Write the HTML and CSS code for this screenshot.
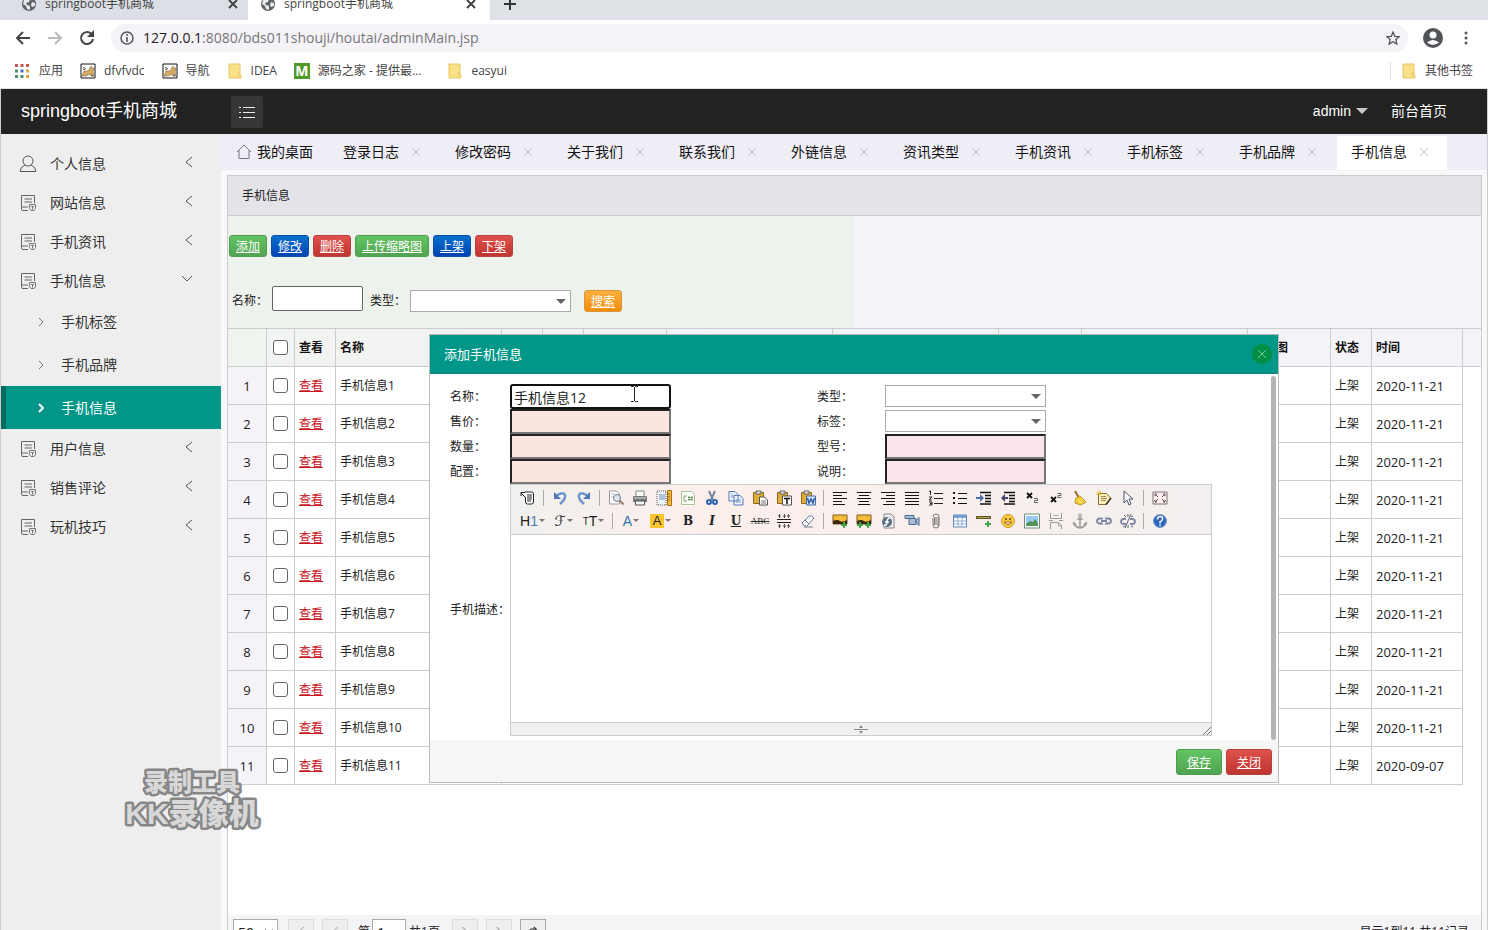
FILE: index.html
```html
<!DOCTYPE html>
<html lang="zh-CN">
<head>
<meta charset="utf-8">
<title>springboot手机商城</title>
<link rel="stylesheet" href="styles.css">
</head>
<body>
<svg class="defs" aria-hidden="true">
  <symbol id="globe" viewBox="0 0 16 16"><circle cx="8" cy="8" r="7" fill="#5f6368"/><path d="M3 4l3-2 3 1-1 3-3 1 1 2 3 1v4l-3-1-1-3-3-2zM11 6l3 1v3l-3 1-1-2z" fill="#e8eaee"/></symbol>
  <symbol id="close" viewBox="0 0 10 10"><path d="M1 1l8 8M9 1l-8 8" fill="none" stroke="currentColor"/></symbol>
  <symbol id="folder" viewBox="0 0 14 16"><path d="M1 1h11v10l1 1v3H1z" fill="#fbe08a" stroke="#e8c662"/><path d="M10 14v-4h2" fill="none" stroke="#e8c662"/></symbol>
  <symbol id="cat" viewBox="0 0 16 16"><path d="M1 1h14v14H1z" fill="#fff" stroke="#111"/><path d="M2 13l2-5 4 0 3-5 1 2 2 0-1 4 1 4h-3l-1-2-4 2z" fill="#d6aa60" stroke="#8f7852" stroke-width=".7"/><path d="M3 4l3 2M3 6l2 1M11 12l2 1" stroke="#555"/></symbol>
  <symbol id="doc" viewBox="0 0 18 18"><path d="M9 16.500H4q-1.500 0-1.500-1.500V1.500h13V9M5.500 5h7.500M5.500 8h7.500M2.500 13H9" fill="none" stroke="#666"/><path d="M10.500 10.500h6v4L15 16.500h-3L10.500 14.500zM12 12.500h3M13.500 12.500v3" fill="none" stroke="#777"/></symbol>
  <symbol id="left" viewBox="0 0 8 12"><path d="M7 1L1 6l6 5" fill="none" stroke="currentColor"/></symbol>
  <symbol id="right" viewBox="0 0 6 10"><path d="M1 1l4 4-4 4" fill="none" stroke="currentColor"/></symbol>
  <symbol id="picture" viewBox="0 0 16 16"><path d="M1 2h14v9H1z" fill="#f7bd38" stroke="#805b16"/><path d="M1 8q4-2 7 0t7-1v4H1z" fill="#3a2a14"/></symbol>
</svg>

<div class="chrome">
  <div class="strip">
    <div class="btab btab-idle"><svg><use href="#globe"/></svg><span>springboot手机商城</span><button aria-label="关闭标签页"><svg><use href="#close"/></svg></button></div>
    <div class="btab btab-on"><svg><use href="#globe"/></svg><span>springboot手机商城</span><button aria-label="关闭标签页"><svg><use href="#close"/></svg></button></div>
    <button class="newtab" aria-label="新标签页"><svg viewBox="0 0 12 12"><path d="M6 0v12M0 6h12" stroke="#333" stroke-width="2"/></svg></button>
  </div>
  <div class="address">
    <button class="nav" aria-label="后退"><svg viewBox="0 0 16 16"><path d="M15 8H2M8 2L2 8l6 6" fill="none" stroke="#444" stroke-width="2"/></svg></button>
    <button class="nav" aria-label="前进"><svg viewBox="0 0 16 16"><path d="M1 8h13M8 2l6 6-6 6" fill="none" stroke="#bbb" stroke-width="2"/></svg></button>
    <button class="nav" aria-label="刷新"><svg viewBox="0 0 16 16"><path d="M14 9a6 6 0 1 1-2-5.500l2 2" fill="none" stroke="#444" stroke-width="2"/><path d="M15 0v7H8z" fill="#444"/></svg></button>
    <div class="omnibox">
      <svg viewBox="0 0 14 14"><circle cx="7" cy="7" r="6" fill="none" stroke="#555" stroke-width="1.500"/><path d="M7 6v5M7 3v1.800" stroke="#555" stroke-width="1.600"/></svg>
      <span class="url"><b>127.0.0.1</b>:8080/bds011shouji/houtai/adminMain.jsp</span>
      <svg viewBox="0 0 14 14"><path d="M7 1l1.700 4.300 4.600.3-3.500 3 1.100 4.500L7 10.700l-3.900 2.400 1.100-4.500-3.500-3 4.600-.3z" fill="none" stroke="#555" stroke-width="1.300"/></svg>
    </div>
    <svg class="avatar" viewBox="0 0 20 20"><circle cx="10" cy="10" r="10" fill="#505357"/><circle cx="10" cy="7" r="3.500" fill="#fff"/><path d="M4 14.500q6-5 12 0-6 4.500-12 0z" fill="#fff"/></svg>
    <svg class="kebab" viewBox="0 0 4 14"><circle cx="2" cy="2" r="1.500"/><circle cx="2" cy="7" r="1.500"/><circle cx="2" cy="12" r="1.500"/></svg>
  </div>
  <div class="bookmarks">
    <a href="#" class="bm"><svg class="apps" viewBox="0 0 14 14"><path d="M0 0h3v3H0zM5.500 0h3v3h-3zM11 0h3v3h-3z" fill="#c6574c"/><path d="M0 5.500h3v3H0z" fill="#4a8f65"/><path d="M5.500 5.500h3v3h-3z" fill="#3974bd"/><path d="M11 5.500h3v3h-3zM11 11h3v3h-3z" fill="#d9a33f"/><path d="M0 11h3v3H0zM5.500 11h3v3h-3z" fill="#4e9464"/></svg>应用</a>
    <a href="#" class="bm"><svg><use href="#cat"/></svg>dfvfvdc</a>
    <a href="#" class="bm"><svg><use href="#cat"/></svg>导航</a>
    <a href="#" class="bm bm-folder"><svg><use href="#folder"/></svg>IDEA</a>
    <a href="#" class="bm"><span class="mlogo">M</span>源码之家 - 提供最...</a>
    <a href="#" class="bm bm-easy"><svg><use href="#folder"/></svg>easyui</a>
    <a href="#" class="bm bm-other"><svg><use href="#folder"/></svg>其他书签</a>
  </div>
</div>

<div class="app">
  <header class="top">
    <h1>springboot手机商城</h1>
    <button class="fold" aria-label="折叠菜单"><svg viewBox="0 0 16 12"><path d="M4 1.500h12M4 6.500h12M4 11.500h12M0 1.500h2M0 6.500h2M0 11.500h2" stroke="#eee"/></svg></button>
    <a href="#" class="user">admin<i></i></a>
    <a href="#" class="front">前台首页</a>
  </header>

  <div class="frame">
    <nav class="side">
      <a href="#" class="item"><svg viewBox="0 0 18 18"><circle cx="9" cy="6" r="5" fill="none" stroke="#555"/><path d="M6 10q-4.500 1.500-5 6.500h16q-.5-5-5-6.500" fill="none" stroke="#555"/></svg>个人信息<svg class="arrow"><use href="#left"/></svg></a>
      <a href="#" class="item"><svg><use href="#doc"/></svg>网站信息<svg class="arrow"><use href="#left"/></svg></a>
      <a href="#" class="item"><svg><use href="#doc"/></svg>手机资讯<svg class="arrow"><use href="#left"/></svg></a>
      <a href="#" class="item"><svg><use href="#doc"/></svg>手机信息<svg class="arrow open" viewBox="0 0 12 8"><path d="M1 1l5 5 5-5" fill="none" stroke="#555"/></svg></a>
      <a href="#" class="sub"><svg><use href="#right"/></svg>手机标签</a>
      <a href="#" class="sub"><svg><use href="#right"/></svg>手机品牌</a>
      <a href="#" class="sub current"><svg><use href="#right"/></svg>手机信息</a>
      <a href="#" class="item"><svg><use href="#doc"/></svg>用户信息<svg class="arrow"><use href="#left"/></svg></a>
      <a href="#" class="item"><svg><use href="#doc"/></svg>销售评论<svg class="arrow"><use href="#left"/></svg></a>
      <a href="#" class="item"><svg><use href="#doc"/></svg>玩机技巧<svg class="arrow"><use href="#left"/></svg></a>
    </nav>

    <main class="main">
      <div class="tabs">
        <a href="#" class="home"><svg viewBox="0 0 16 16"><path d="M1 8l7-7 7 7M3 6.500V14.500h10V6.500" fill="none" stroke="#777"/></svg>我的桌面</a>
        <a href="#" class="tab">登录日志<svg><use href="#close"/></svg></a>
        <a href="#" class="tab">修改密码<svg><use href="#close"/></svg></a>
        <a href="#" class="tab">关于我们<svg><use href="#close"/></svg></a>
        <a href="#" class="tab">联系我们<svg><use href="#close"/></svg></a>
        <a href="#" class="tab">外链信息<svg><use href="#close"/></svg></a>
        <a href="#" class="tab">资讯类型<svg><use href="#close"/></svg></a>
        <a href="#" class="tab">手机资讯<svg><use href="#close"/></svg></a>
        <a href="#" class="tab">手机标签<svg><use href="#close"/></svg></a>
        <a href="#" class="tab">手机品牌<svg><use href="#close"/></svg></a>
        <a href="#" class="tab on">手机信息<svg><use href="#close"/></svg></a>
      </div>

      <section class="panel">
        <h2 class="panel-title">手机信息</h2>
        <div class="tools">
          <div class="actions">
            <a href="#" class="btn green">添加</a><a href="#" class="btn blue">修改</a><a href="#" class="btn red">删除</a><a href="#" class="btn green">上传缩略图</a><a href="#" class="btn blue">上架</a><a href="#" class="btn red">下架</a>
          </div>
          <form class="search">
            <label for="q-name">名称：</label><input id="q-name" class="q-name" type="text">
            <label for="q-type">类型：</label><span class="combo"><select id="q-type"><option></option></select></span>
            <a href="#" class="btn orange">搜索</a>
          </form>
        </div>

        <div class="grid">
          <table>
            <colgroup><col class="w39"><col class="w28"><col class="w41"><col class="w166"><col class="w41"><col class="w41"><col class="w83"><col class="w166"><col class="w166"><col class="w83"><col class="w166"><col class="w83"><col class="w41"><col class="w91"><col></colgroup>
            <thead><tr><th></th><th class="check"><input type="checkbox" aria-label="全选"></th><th>查看</th><th>名称</th><th></th><th></th><th></th><th></th><th></th><th></th><th></th><th>缩略图</th><th>状态</th><th>时间</th><th class="end"></th></tr></thead>
            <tbody>
              <tr><td class="num">1</td><td class="check"><input type="checkbox" aria-label="选择1"></td><td><a href="#">查看</a></td><td>手机信息1</td><td colspan="8"></td><td>上架</td><td class="date">2020-11-21</td></tr>
              <tr><td class="num">2</td><td class="check"><input type="checkbox" aria-label="选择2"></td><td><a href="#">查看</a></td><td>手机信息2</td><td colspan="8"></td><td>上架</td><td class="date">2020-11-21</td></tr>
              <tr><td class="num">3</td><td class="check"><input type="checkbox" aria-label="选择3"></td><td><a href="#">查看</a></td><td>手机信息3</td><td colspan="8"></td><td>上架</td><td class="date">2020-11-21</td></tr>
              <tr><td class="num">4</td><td class="check"><input type="checkbox" aria-label="选择4"></td><td><a href="#">查看</a></td><td>手机信息4</td><td colspan="8"></td><td>上架</td><td class="date">2020-11-21</td></tr>
              <tr><td class="num">5</td><td class="check"><input type="checkbox" aria-label="选择5"></td><td><a href="#">查看</a></td><td>手机信息5</td><td colspan="8"></td><td>上架</td><td class="date">2020-11-21</td></tr>
              <tr><td class="num">6</td><td class="check"><input type="checkbox" aria-label="选择6"></td><td><a href="#">查看</a></td><td>手机信息6</td><td colspan="8"></td><td>上架</td><td class="date">2020-11-21</td></tr>
              <tr><td class="num">7</td><td class="check"><input type="checkbox" aria-label="选择7"></td><td><a href="#">查看</a></td><td>手机信息7</td><td colspan="8"></td><td>上架</td><td class="date">2020-11-21</td></tr>
              <tr><td class="num">8</td><td class="check"><input type="checkbox" aria-label="选择8"></td><td><a href="#">查看</a></td><td>手机信息8</td><td colspan="8"></td><td>上架</td><td class="date">2020-11-21</td></tr>
              <tr><td class="num">9</td><td class="check"><input type="checkbox" aria-label="选择9"></td><td><a href="#">查看</a></td><td>手机信息9</td><td colspan="8"></td><td>上架</td><td class="date">2020-11-21</td></tr>
              <tr><td class="num">10</td><td class="check"><input type="checkbox" aria-label="选择10"></td><td><a href="#">查看</a></td><td>手机信息10</td><td colspan="8"></td><td>上架</td><td class="date">2020-11-21</td></tr>
              <tr><td class="num">11</td><td class="check"><input type="checkbox" aria-label="选择11"></td><td><a href="#">查看</a></td><td>手机信息11</td><td colspan="8"></td><td>上架</td><td class="date">2020-09-07</td></tr>
            </tbody>
          </table>
        </div>

        <div class="pager">
          <select class="size" aria-label="每页条数"><option>50</option></select>
          <button class="pg" aria-label="首页"><svg><use href="#left"/></svg></button>
          <button class="pg" aria-label="上一页"><svg><use href="#left"/></svg></button>
          <label class="page" for="page">第</label><input id="page" type="text" value="1"><span class="total">共1页</span>
          <button class="pg" aria-label="下一页"><svg><use href="#right"/></svg></button>
          <button class="pg" aria-label="末页"><svg><use href="#right"/></svg></button>
          <button class="pg reload" aria-label="刷新"><svg viewBox="0 0 12 12"><path d="M10 7a4.500 4.500 0 1 1-2-4M7 0l3 3-3 2" fill="none" stroke="#444" stroke-width="1.500"/></svg></button>
          <span class="count">显示1到11,共11记录</span>
        </div>

        <div class="dialog" role="dialog" aria-labelledby="dlg-title">
          <div class="dlg-head"><h3 id="dlg-title">添加手机信息</h3><button aria-label="关闭"><svg><use href="#close"/></svg></button></div>
          <form class="dlg-body">
            <label for="f-name">名称：</label><input id="f-name" class="field focus" type="text" value="手机信息12">
            <label for="f-type">类型：</label><span class="combo"><select id="f-type"><option></option></select></span>
            <label for="f-price">售价：</label><input id="f-price" class="field" type="text">
            <label for="f-tag">标签：</label><span class="combo"><select id="f-tag"><option></option></select></span>
            <label for="f-count">数量：</label><input id="f-count" class="field" type="text">
            <label for="f-model">型号：</label><input id="f-model" class="field pink" type="text">
            <label for="f-conf">配置：</label><input id="f-conf" class="field" type="text">
            <label for="f-note">说明：</label><input id="f-note" class="field pink" type="text">
            <label for="f-desc">手机描述：</label>
            <div class="editor">
              <div class="bar">
                <div class="bar-row">
                  <button type="button" aria-label="HTML代码"><svg viewBox="0 0 16 16"><path d="M4.500 2h7q2 0 2 2v8q0 2-2 2h-4q-2 0-2-2V7" fill="#fff" stroke="#222"/><path d="M7 5h5M7 7h5M7 9h5M7 11h4M1 3l4 4M1 6V2.500h4" fill="none" stroke="#222"/></svg></button><i></i>
                  <button type="button" aria-label="后退"><svg viewBox="0 0 16 16"><path d="M4 6q7-5 9-1 1 4-5 9" fill="none" stroke="#6f95cf" stroke-width="2.500"/><path d="M2 2v7h7z" fill="#4d79bb"/></svg></button>
                  <button type="button" aria-label="前进"><svg viewBox="0 0 16 16"><path d="M12 6Q5 1 3 5q-1 4 5 9" fill="none" stroke="#6f95cf" stroke-width="2.500"/><path d="M14 2v7H7z" fill="#4d79bb"/></svg></button><i></i>
                  <button type="button" aria-label="预览"><svg viewBox="0 0 16 16"><path d="M1.500 1h7l3 3v10h-10z" fill="#fff" stroke="#999"/><path d="M3 4h4M3 7h3" stroke="#bbb"/><circle cx="9" cy="8" r="3.500" fill="#d8e8f2" stroke="#778"/><path d="M11.500 10.500l4 4" stroke="#9b8064" stroke-width="2"/></svg></button>
                  <button type="button" aria-label="打印"><svg viewBox="0 0 16 16"><path d="M4 1h8v6H4z" fill="#fff" stroke="#888"/><path d="M1 7q0-1 1-1h12q1 0 1 1v5H1z" fill="#777"/><path d="M2 8h12" stroke="#ddd"/><path d="M3.500 11h9v4h-9z" fill="#f4f4f4" stroke="#555"/></svg></button>
                  <button type="button" aria-label="模板"><svg viewBox="0 0 16 16"><path d="M1 1h9v14H1z" fill="#eef4fa" stroke="#555" stroke-dasharray="1"/><path d="M3 5h6M3 7h6M3 9h6" stroke="#6b93c4"/><path d="M11.500.5h4v15h-4z" fill="#f2bd3c" stroke="#aa7217"/><path d="M12 4h2M12 7h2M12 10h2" stroke="#925e10"/></svg></button>
                  <button type="button" aria-label="代码"><svg viewBox="0 0 16 16"><path d="M1.500 1.500h10l3 3v10h-13z" fill="#fcfff8" stroke="#a9c399"/><path d="M7 6H4v5h3M9 6v5M12 6v5M8 7.500h5M8 9.500h5" fill="none" stroke="#779e62"/></svg></button>
                  <button type="button" aria-label="剪切"><svg viewBox="0 0 16 16"><path d="M5 1l4 9M11 1L7 10" fill="none" stroke="#76889d" stroke-width="2"/><circle cx="5" cy="12" r="2" fill="none" stroke="#2b66b1" stroke-width="2"/><circle cx="11" cy="12" r="2" fill="none" stroke="#2b66b1" stroke-width="2"/></svg></button>
                  <button type="button" aria-label="复制"><svg viewBox="0 0 16 16"><path d="M1 1.500h6l3 3V11H1zM6 5.500h6l3 3V15H6z" fill="#edf4ff" stroke="#5278b5"/><path d="M3 5h3M3 7h3M8 10h5M8 12h5" stroke="#7e9dcc"/></svg></button>
                  <button type="button" aria-label="粘贴"><svg viewBox="0 0 16 16"><path d="M1.500 2.500h10v11h-10z" fill="#e0ad38" stroke="#8b681a"/><path d="M4 1h5v3H4z" fill="#ddd" stroke="#666"/><path d="M7.500 7h5l3 3v5h-8z" fill="#fff" stroke="#555"/><path d="M9 11h5M9 13h5" stroke="#777"/></svg></button>
                  <button type="button" aria-label="粘贴为无格式文本"><svg viewBox="0 0 16 16"><path d="M1.500 2.500h10v11h-10z" fill="#e0ad38" stroke="#8b681a"/><path d="M4 1h5v3H4z" fill="#ddd" stroke="#666"/><path d="M6.500 6h9v9h-9z" fill="#fff" stroke="#555"/><path d="M8 8.500h6M11 8v6" stroke="#111" stroke-width="1.500"/></svg></button>
                  <button type="button" aria-label="从Word粘贴"><svg viewBox="0 0 16 16"><path d="M1.500 2.500h10v11h-10z" fill="#e0ad38" stroke="#8b681a"/><path d="M4 1h5v3H4z" fill="#ddd" stroke="#666"/><path d="M6.500 6h9v9h-9z" fill="#dceaff" stroke="#486ba5"/><path d="M7.500 8l1.500 5 2-4 2 4 1.500-5" fill="none" stroke="#2459a4" stroke-width="1.500"/></svg></button><i></i>
                  <button type="button" aria-label="左对齐"><svg viewBox="0 0 16 16"><path d="M1 2.500h14M1 5.500h9M1 8.500h14M1 11.500h9M1 14.500h12" stroke="#111"/></svg></button>
                  <button type="button" aria-label="居中"><svg viewBox="0 0 16 16"><path d="M1 2.500h14M3 5.500h10M1 8.500h14M3 11.500h10M2 14.500h12" stroke="#111"/></svg></button>
                  <button type="button" aria-label="右对齐"><svg viewBox="0 0 16 16"><path d="M1 2.500h14M6 5.500h9M1 8.500h14M6 11.500h9M3 14.500h12" stroke="#111"/></svg></button>
                  <button type="button" aria-label="两端对齐"><svg viewBox="0 0 16 16"><path d="M1 2.500h14M1 5.500h14M1 8.500h14M1 11.500h14M1 14.500h14" stroke="#111"/></svg></button>
                  <button type="button" aria-label="编号"><svg viewBox="0 0 16 16"><path d="M6 3.500h9M6 8.500h9M6 13.500h9M2.500 1v4M1 2l1.500-1M1 7h3L1 10h3M1 12h3v3H1M2 13.500h2" fill="none" stroke="#222"/></svg></button>
                  <button type="button" aria-label="项目符号"><svg viewBox="0 0 16 16"><path d="M6 3.500h9M6 8.500h9M6 13.500h9" stroke="#111"/><path d="M1 2h2v2H1zM1 7h2v2H1zM1 12h2v2H1z" fill="#111"/></svg></button>
                  <button type="button" aria-label="增加缩进"><svg viewBox="0 0 16 16"><path d="M4 2.500h11M9 5.500h6M9 8.500h6M9 11.500h6M4 14h11" stroke="#111" stroke-width="1.500"/><path d="M0 7h4V4l4 4-4 4V9H0z" fill="#506ba5"/></svg></button>
                  <button type="button" aria-label="减少缩进"><svg viewBox="0 0 16 16"><path d="M4 2.500h11M9 5.500h6M9 8.500h6M9 11.500h6M4 14h11" stroke="#111" stroke-width="1.500"/><path d="M8 7H5V4L1 8l4 4V9h3z" fill="#484573"/></svg></button>
                  <button type="button" aria-label="下标"><svg viewBox="0 0 16 16"><path d="M3 3l5 5M8 3L3 8" stroke="#111" stroke-width="1.800"/><path d="M10 8.500h3.500v2h-3v2H14" fill="none" stroke="#444" stroke-width=".8"/></svg></button>
                  <button type="button" aria-label="上标"><svg viewBox="0 0 16 16"><path d="M3 7l5 5M8 7l-5 5" stroke="#111" stroke-width="1.800"/><path d="M9.500 3.500H13v2h-3v2h3.500" fill="none" stroke="#444" stroke-width=".8"/></svg></button>
                  <button type="button" aria-label="清理代码"><svg viewBox="0 0 16 16"><path d="M3 1l4 7" stroke="#9a6e24" stroke-width="2"/><path d="M4 8l4-2 6 6-5 3-6-2z" fill="#f4cf35" stroke="#bc942c"/><path d="M6 10l4 3" stroke="#fff3a1"/></svg></button>
                  <button type="button" aria-label="一键排版"><svg viewBox="0 0 16 16"><path d="M2.500 3.500h8l4.500 5-5 6H2.500z" fill="#fff0b4" stroke="#8d6a38"/><path d="M5 6.500h5M5 8.500h6M5 10.500h5" stroke="#9b8863"/><path d="M1 1l4 4M4 0v4M0 4h4" stroke="#e7b029"/><path d="M15 8l-5 6.500" stroke="#37332d" stroke-width="1.500"/></svg></button>
                  <button type="button" aria-label="全选"><svg viewBox="0 0 16 16"><path d="M4 1v12l3-3 2 5 2-1-2-5h4z" fill="#fff" stroke="#4f526e"/></svg></button><i></i>
                  <button type="button" aria-label="全屏显示"><svg viewBox="0 0 16 16"><path d="M1 2h14v12H1z" fill="#fbecee" stroke="#777"/><path d="M3 4l3 3M13 4l-3 3M3 12l3-3M13 12l-3-3M3 6V4h2M11 4h2v2M3 10v2h2M11 12h2v-2" fill="none" stroke="#684c59"/></svg></button>
                </div>
                <div class="bar-row">
                  <button type="button" class="w33 heading">H<em>1</em><s></s></button><button type="button" class="w29 script">ℱ<s></s></button><button type="button" class="w31 size-t"><small>T</small>T<s></s></button><i></i>
                  <button type="button" class="w28 fore">A<s></s></button><button type="button" class="w31"><mark>A</mark><s></s></button>
                  <button type="button" class="serif">B</button><button type="button" class="serif ital">I</button><button type="button" class="serif under">U</button><button type="button" class="strike">ABC</button>
                  <button type="button" aria-label="行距"><svg viewBox="0 0 16 16"><path d="M1 6.500h14M1 9.500h14" stroke="#222"/><path d="M3.500 5V1M8.500 5V1M12.500 5V1M3.500 11v4M8.500 11v4M12.500 11v4M2 3h3M7 3h3M11 3h3M2 13h3M7 13h3M11 13h3" stroke="#604f55"/></svg></button>
                  <button type="button" aria-label="删除格式"><svg viewBox="0 0 16 16"><path d="M2 10l7-7q3-1 5 2l-7 8H4z" fill="#fff" stroke="#6c7e9d"/><path d="M5 7l4 4M4 14h9" stroke="#6c7e9d"/></svg></button><i></i>
                  <button type="button" aria-label="图片"><svg viewBox="0 0 16 16"><use href="#picture"/><path d="M12 9v6M9 12h6" stroke="#45a34a" stroke-width="2"/></svg></button>
                  <button type="button" aria-label="批量图片上传"><svg viewBox="0 0 16 16"><use href="#picture"/><path d="M4 9v6M1 12h6M12 9v6M9 12h6" stroke="#45a34a" stroke-width="2"/></svg></button>
                  <button type="button" aria-label="Flash"><svg viewBox="0 0 16 16"><path d="M4 1h7l3 3v11H4z" fill="#eee" stroke="#888"/><circle cx="7" cy="9" r="5" fill="#5d7187"/><path d="M10 5q-3 0-3 4t-3 3M5 9h4" fill="none" stroke="#fff" stroke-width="1.500"/></svg></button>
                  <button type="button" aria-label="视音频"><svg viewBox="0 0 16 16"><path d="M1 2.500h9v3H1zM5 5.500h7v6H5zM12 7.500l3-3v8l-3-3z" fill="#a9bed6" stroke="#4a6b92"/></svg></button>
                  <button type="button" aria-label="插入文件"><svg viewBox="0 0 16 16"><path d="M5 5v7q0 3 3 3t3-3V4q0-3-3-3T5 4M8 4v8M10 4v9M6.500 4v8" fill="none" stroke="#777"/></svg></button>
                  <button type="button" aria-label="表格"><svg viewBox="0 0 16 16"><path d="M1.500 2h13v12h-13z" fill="#fff" stroke="#5e86b8"/><path d="M2 2h12v3H2z" fill="#75a0d1"/><path d="M2 8h12M2 11h12M6 5v9M10 5v9" stroke="#8dabd1"/></svg></button>
                  <button type="button" aria-label="插入横线"><svg viewBox="0 0 16 16"><path d="M0 3h15v3H0z" fill="#685322"/><path d="M1 4.500h13" stroke="#b0a055"/><path d="M12 8v6M9 11h6" stroke="#43a44c" stroke-width="2"/></svg></button>
                  <button type="button" aria-label="插入表情"><svg viewBox="0 0 16 16"><circle cx="8" cy="8" r="6.500" fill="#f9cc43" stroke="#d49d29"/><circle cx="6" cy="6" r="1" fill="#684710"/><circle cx="10" cy="6" r="1" fill="#684710"/><path d="M4 9q4 5 8 0z" fill="#fff7c3" stroke="#99631b"/></svg></button>
                  <button type="button" aria-label="地图"><svg viewBox="0 0 16 16"><path d="M.5 1h15v14H.5z" fill="#fff" stroke="#6a9074"/><path d="M2 3h12v10H2z" fill="#98c9ef"/><path d="M2 11l4-3 3 1 2-3 3 4v3H2z" fill="#559458"/></svg></button>
                  <button type="button" aria-label="分页符"><svg viewBox="0 0 16 16"><path d="M2.500 0v5.500h11V0M2.500 16V9.500h8l3 3V16M1 7.500h4M11 7.500h4" fill="none" stroke="#999"/><path d="M5 2.500h6M10.500 10v3h3" fill="none" stroke="#aaa"/></svg></button>
                  <button type="button" aria-label="锚点"><svg viewBox="0 0 16 16"><circle cx="8" cy="2.500" r="1.500" fill="none" stroke="#888"/><path d="M8 4v11M5 6h6M1.500 9q1 5 6.500 6 5.500-1 6.500-6M1 10l3 1M15 10l-3 1" fill="none" stroke="#999" stroke-width="1.500"/></svg></button>
                  <button type="button" aria-label="超级链接"><svg viewBox="0 0 16 16"><path d="M7 5.500H4q-3 0-3 2.500t3 2.500h3M9 5.500h3q3 0 3 2.500t-3 2.500H9M5 8h6" fill="none" stroke="#7d86a5" stroke-width="1.800"/></svg></button>
                  <button type="button" aria-label="取消超级链接"><svg viewBox="0 0 16 16"><path d="M6 6H4Q1 6 1 8.500T4 11h2M10 6h2q3 0 3 2.500T12 11h-2" fill="none" stroke="#7d86a5" stroke-width="1.800"/><path d="M11 1L5 15M4 2l2 2M8 1v3M13 3l-2 1M3 14l2-1M8 15v-3M13 14l-2-1" stroke="#5b5e75"/></svg></button><i></i>
                  <button type="button" aria-label="关于"><svg viewBox="0 0 16 16"><circle cx="8" cy="8" r="6.500" fill="#2e67b7" stroke="#789ed0"/><path d="M5.500 6.500q0-3 2.700-3t2.400 2.500Q10.500 7.500 8 9v1.500M8 11.500v1.500" fill="none" stroke="#fff" stroke-width="1.500"/></svg></button>
                </div>
              </div>
              <textarea id="f-desc"></textarea>
              <div class="status"><svg viewBox="0 0 16 9"><path d="M1 4.500h14" stroke="#888"/><path d="M6 3h4L8 0zM6 6h4L8 9z" fill="#888"/></svg><svg class="grip" viewBox="0 0 8 8"><path d="M0 8l8-8M4 8l4-4" stroke="#777"/></svg></div>
            </div>
            <span class="thumb"></span>
            <svg class="ibeam" viewBox="0 0 7 16"><path d="M0 .5h2.500l1 1 1-1H7M3.500 1v14M0 15.500h2.500l1-1 1 1H7" fill="none" stroke="#222"/></svg>
          </form>
          <div class="dlg-foot"><a href="#" class="btn green big">保存</a><a href="#" class="btn red big">关闭</a></div>
        </div>
      </section>
    </main>
  </div>
</div>

<svg class="mark" viewBox="0 0 140 66"><text x="70" y="24" font-size="24">录制工具</text><text x="70" y="57" font-size="30">KK录像机</text></svg>
</body>
</html>
```
FILE: styles.css
```css
* { box-sizing: border-box; }
body {
  margin: 0;
  height: 100vh;
  overflow: hidden;
  background: #fff;
  color: #222;
  font: 12px/18px "Open Sans", "Noto Sans CJK SC", sans-serif;
}
a { color: inherit; text-decoration: none; }
button { padding: 0; border: 0; background: none; font: inherit; color: inherit; }
input, select, textarea { font: inherit; color: #222; margin: 0; }
svg { display: block; flex: none; }
h1, h2, h3 { margin: 0; font-weight: 400; }
label { font-family: "Open Sans", "Noto Sans CJK TC", sans-serif; }
.defs { position: absolute; width: 0; height: 0; }

/* Browser frame */
.strip { display: flex; align-items: flex-end; height: 20px; overflow: hidden; background: #dee1e6; }
.btab { display: flex; align-items: center; flex: none; height: 32px; padding: 0 10px 0 21px; gap: 8px; color: #444; }
.btab > svg { width: 16px; height: 16px; }
.btab span { flex: 1; }
.btab button svg { width: 10px; height: 10px; stroke-width: 2; }
.btab-idle { width: 248px; background: #dcdfe6; }
.btab-on { width: 242px; padding-left: 12px; padding-right: 14px; background: #fff; }
.newtab { height: 32px; padding-left: 14px; }
.newtab svg { width: 12px; height: 12px; }
.address { display: flex; align-items: center; height: 36px; padding: 0 20px 0 15px; }
.nav { margin-right: 16px; }
.nav svg { width: 16px; height: 16px; }
.omnibox { display: flex; flex: 1; align-items: center; gap: 9px; height: 28px; padding: 0 8px 0 9px; border-radius: 14px; background: #f5f3f8; }
.omnibox svg { width: 14px; height: 14px; }
.url { flex: 1; color: #777; font-size: 14px; }
.url b { font-weight: 400; color: #222; }
.avatar { width: 20px; height: 20px; margin: 0 21px 0 15px; }
.kebab { width: 4px; height: 14px; fill: #555; }
.bookmarks { display: flex; align-items: center; height: 33px; padding: 0 15px 3px; gap: 17px; border-bottom: 1px solid #e2e2e2; color: #444; }
.bm { display: flex; align-items: center; gap: 8px; }
.bm svg { width: 16px; height: 16px; }
.bm .apps { width: 14px; height: 14px; margin-right: 2px; }
.mlogo { width: 16px; height: 16px; background: #4f9a2b; color: #fff; font-weight: 700; font-size: 14px; line-height: 16px; text-align: center; }
.bm-easy { margin-left: 9px; }
.bm-other { margin-left: auto; padding-left: 10px; border-left: 1px solid #ddd; }

/* Application header */
.app { display: flex; flex-direction: column; height: calc(100vh - 70px); border: solid #ccc; border-width: 0 1px; }
.top { display: flex; align-items: center; flex: none; height: 45px; padding: 0 40px 0 20px; background: #222; color: #fff; font: 14px/20px "Liberation Sans", "Noto Sans CJK SC", sans-serif; }
.top h1, .top a { padding-bottom: 2px; }
.top h1 { width: 210px; font-size: 18px; }
.fold { display: grid; place-items: center; width: 32px; height: 32px; border-radius: 2px; background: #363636; }
.fold svg { width: 16px; height: 12px; }
.user { display: flex; align-items: center; gap: 5px; margin-left: auto; }
.user i { border: 6px solid transparent; border-top-color: #c8c8c8; border-bottom: 0; }
.front { margin-left: 23px; }
.frame { display: flex; flex: 1; min-height: 0; }

/* Sidebar */
.side { flex: none; width: 220px; padding-top: 10px; background: #eee; color: #333; font-size: 14px; }
.item { display: flex; align-items: center; height: 39px; padding: 0 28px 0 18px; gap: 13px; }
.item > svg { width: 18px; height: 18px; }
.item > .arrow { width: 8px; height: 12px; margin: 0 0 4px auto; color: #555; }
.item > .open { width: 12px; height: 8px; }
.sub { display: flex; align-items: center; height: 43px; padding-left: 37px; gap: 17px; }
.sub svg { width: 6px; height: 10px; color: #777; }
.current { padding-left: 32px; border-left: 5px solid #066b61; background: #009688; color: #fff; }
.current svg { color: #fff; stroke-width: 2; }

/* Page tabs */
.main { display: flex; flex: 1; flex-direction: column; min-width: 0; padding: 0 5px 0 6px; background: #f8f8fb; }
.tabs { display: flex; flex: none; height: 36px; margin: 0 -5px 5px -6px; padding-left: 6px; background: #efeef6; color: #111; font-size: 14px; }
.tabs a { display: flex; align-items: center; }
.home { width: 102px; padding-left: 9px; gap: 5px; }
.home svg { width: 16px; height: 16px; }
.tab { width: 110px; margin: 2px 2px 0 0; padding: 0 0 2px 14px; gap: 12px; }
.tab svg { width: 10px; height: 10px; color: #c5c3ca; }
.on { background: #fff; }

/* Panel */
.panel { position: relative; display: flex; flex: 1; flex-direction: column; min-height: 0; border: 1px solid #ccc; background: #fff; }
.panel-title { flex: none; height: 40px; padding-left: 14px; border-bottom: 1px solid #ccc; background: #e4e3e8; font-size: 12px; line-height: 39px; }
.tools { flex: none; height: 113px; padding: 19px 1px 0; border-bottom: 1px solid #ccc; background: linear-gradient(90deg, #eef2ed 50%, #f4f3f8 50%); }
.actions { display: flex; gap: 4px; }
.btn { display: block; height: 22px; padding: 0 6px; border: 1px solid; border-radius: 3px; color: #fff; line-height: 22px; text-decoration: underline; }
.green { background: linear-gradient(#62c462, #51a351); border-color: #4f9c4f; }
.blue { background: linear-gradient(#0870cc, #0044b4); border-color: #0650a8; }
.red { background: linear-gradient(#e0514c, #bd362f); border-color: #b8433e; }
.orange { background: linear-gradient(#fbb040, #f28c0c); border-color: #d89638; }
.search { display: flex; align-items: center; margin-top: 29px; padding-left: 3px; }
.search label { width: 40px; }
.search .q-name { width: 91px; height: 25px; margin: 0 7px 4px 0; border: 1px solid #666; border-radius: 2px; }
.search .orange { margin: 1px 0 0 13px; }
.combo { position: relative; display: block; width: 161px; height: 22px; }
.combo::after { content: ""; position: absolute; right: 5px; top: 9px; border: 5px solid transparent; border-top-color: #666; border-bottom: 0; pointer-events: none; }
.combo select { appearance: none; width: 100%; height: 100%; border: 1px solid #aaa; border-radius: 0; background: #fff; }

/* Data grid */
.grid { flex: 1; min-height: 0; overflow: hidden; }
table { width: 100%; border-collapse: separate; border-spacing: 0; table-layout: fixed; }
th, td { height: 38px; padding: 0 4px; border: solid #ccc; border-width: 0 1px 1px 0; text-align: left; white-space: nowrap; overflow: hidden; }
thead { background: linear-gradient(90deg, #f0f4ef, #f4f3f8 40%); }
th { color: #111; font-weight: 700; }
.end { border-right: 0; }
.num { background: #f5f2f8; text-align: center; font-size: 13px; }
.date { font-size: 13px; }
.check { padding: 0; text-align: center; }
.check input { appearance: none; display: block; width: 15px; height: 15px; margin: 0 auto; border: 1px solid #666; border-radius: 3px; background: #fff; }
td a { color: #c9151e; text-decoration: underline; }
.w28 { width: 28px; }
.w39 { width: 39px; }
.w41 { width: 41px; }
.w83 { width: 83px; }
.w91 { width: 91px; }
.w166 { width: 166px; }

/* Pager */
.pager { display: flex; align-items: flex-start; flex: none; height: 33px; padding: 4px 12px 0 5px; background: #f4f3f6; }
.pager .size { width: 45px; height: 26px; margin-right: 2px; border: 1px solid #aaa; background: #fff; font-size: 14px; }
.pg { display: grid; place-items: center; width: 26px; height: 26px; margin-left: 8px; border: 1px solid #ddd; background: #eee; color: #aaa; }
.pg svg { width: 10px; height: 12px; }
.page { margin: 4px 2px 0 10px; }
.pager input { width: 34px; height: 26px; padding: 0 4px; border: 1px solid #aaa; font-size: 14px; }
.total { margin: 4px 4px 0 3px; }
.reload { border-color: #aaa; }
.count { margin: 4px 0 0 auto; }

/* Dialog */
.dialog { position: absolute; left: 201px; top: 158px; width: 850px; border: 1px solid #bbb; background: #fff; }
.dlg-head { display: flex; align-items: center; justify-content: space-between; height: 39px; padding: 0 6px 0 14px; border-bottom: 1px solid #267f76; background: #009688; color: #fff; }
.dlg-head h3 { font-size: 13px; }
.dlg-head button { display: grid; place-items: center; width: 20px; height: 20px; border-radius: 50%; background: #008f45; color: #7dd09a; }
.dlg-head svg { width: 10px; height: 10px; }
.dlg-body { position: relative; display: grid; grid-template-columns: 60px 307px 68px 1fr; grid-auto-rows: minmax(25px, auto); align-items: center; padding: 10px 66px 4px 20px; }
.dlg-body .combo { margin-bottom: 2px; }
.field { width: 161px; height: 25px; padding: 0 2px; border: 2px solid; border-color: #222 #777 #777 #222; background: #fce5e0; font-size: 14px; }
.pink { background: #fbe4ea; }
.focus { border: 2px solid #111; border-radius: 3px; background: #fff; outline: 0; }
.editor { grid-column: 2 / -1; display: flex; flex-direction: column; height: 252px; border: 1px solid #ccc; }
.bar { height: 50px; padding: 1px 5px; border-bottom: 1px solid #ccc; background: linear-gradient(90deg, #f0f0ee, #fcefec 25%, #f4f0ef); }
.bar-row { display: flex; align-items: center; height: 23px; }
.bar button { display: flex; align-items: center; justify-content: center; flex: none; width: 24px; height: 23px; color: #222; }
.bar svg { width: 16px; height: 16px; }
.bar-row > i { flex: none; width: 1px; height: 16px; margin: 0 4px 0 3px; background: #aaa; }
.bar s { margin-left: 1px; border: 3px solid transparent; border-top-color: #777; border-bottom: 0; }
.bar em { color: #5079ad; font-style: normal; }
.bar .w33 { width: 33px; }
.bar .w29 { width: 29px; }
.bar .w31 { width: 31px; }
.bar .w28 { width: 28px; }
.bar .heading, .bar .size-t, .bar .fore { font: 14px/20px "Liberation Sans", sans-serif; }
.bar .script { font: 14px/20px "DejaVu Sans", sans-serif; }
.bar .fore { color: #3472b4; }
.bar small { align-self: flex-end; font-size: 10px; }
.bar mark { width: 14px; height: 14px; background: #fcc52e; color: #222; font: 13px/14px "Liberation Sans", sans-serif; text-align: center; }
.bar .serif { font: bold 12px/20px "DejaVu Serif", "Liberation Serif", serif; }
.bar .ital { font-style: italic; }
.bar .under { text-decoration: underline; }
.bar .strike { font: 9px/14px "Liberation Serif", serif; text-decoration: line-through; }
.editor textarea { flex: 1; border: 0; resize: none; background: #fff; outline: 0; }
.status { display: flex; align-items: center; justify-content: center; position: relative; height: 13px; border-top: 1px solid #ccc; background: #f0f0f0; }
.status svg { width: 16px; height: 9px; }
.status .grip { position: absolute; right: 0; bottom: 0; width: 8px; height: 8px; }
.thumb { position: absolute; right: 2px; top: 2px; bottom: 0; width: 5px; border-radius: 3px; background: #b5b5b5; }
.ibeam { position: absolute; left: 201px; top: 12px; width: 7px; height: 16px; }
.dlg-foot { display: flex; justify-content: flex-end; gap: 4px; height: 42px; padding: 9px 6px 0; background: #f6f6f4; }
.big { height: 26px; padding: 0 10px; line-height: 26px; }

/* Recorder watermark lies over the page */
.mark { position: absolute; left: 122px; top: 767px; width: 140px; height: 66px; }
.mark text { font-family: "Liberation Sans", "Noto Sans CJK SC", sans-serif; font-weight: 900; text-anchor: middle; fill: #d8d8d8; stroke: #878787; stroke-width: 5px; stroke-linejoin: round; paint-order: stroke; }
```
